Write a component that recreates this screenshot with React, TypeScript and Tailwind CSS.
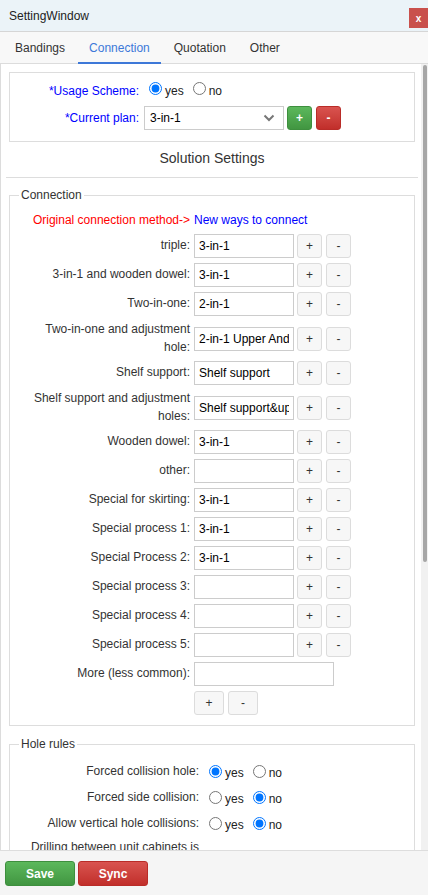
import React from "react";

const connRows: { label: string; value: string }[] = [
  { label: "triple:", value: "3-in-1" },
  { label: "3-in-1 and wooden dowel:", value: "3-in-1" },
  { label: "Two-in-one:", value: "2-in-1" },
  { label: "Two-in-one and adjustment hole:", value: "2-in-1 Upper And Lower" },
  { label: "Shelf support:", value: "Shelf support" },
  { label: "Shelf support and adjustment holes:", value: "Shelf support&upper and lower" },
  { label: "Wooden dowel:", value: "3-in-1" },
  { label: "other:", value: "" },
  { label: "Special for skirting:", value: "3-in-1" },
  { label: "Special process 1:", value: "3-in-1" },
  { label: "Special Process 2:", value: "3-in-1" },
  { label: "Special process 3:", value: "" },
  { label: "Special process 4:", value: "" },
  { label: "Special process 5:", value: "" },
];

const holeRows: { label: string; yes: boolean }[] = [
  { label: "Forced collision hole:", yes: true },
  { label: "Forced side collision:", yes: false },
  { label: "Allow vertical hole collisions:", yes: false },
  { label: "Drilling between unit cabinets is allowed:", yes: false },
];

function SmallBtn({ children, w = "w-[25px]" }: { children: React.ReactNode; w?: string }) {
  return (
    <div
      className={`${w} h-[24px] shrink-0 rounded-[3px] border border-[#dcdcdc] bg-[#f7f7f7] text-[#333] text-[12px] flex items-center justify-center`}
    >
      {children}
    </div>
  );
}

function Radio({ name, checked }: { name: string; checked: boolean }) {
  return (
    <input
      type="radio"
      name={name}
      defaultChecked={checked}
      className="m-0 w-[13px] h-[13px] shrink-0"
    />
  );
}

export default function App() {
  return (
    <div className="w-[428px] h-[895px] flex flex-col overflow-hidden bg-white text-[12px] text-[#333] font-['Liberation_Sans',Arial,sans-serif]">
      {/* Title bar */}
      <div className="h-[32px] shrink-0 border-b border-[#d6d6d6] bg-[#ebf3f8] flex items-center justify-between pl-[9px]">
        <span className="text-[12px] text-[#222]">SettingWindow</span>
        <div className="w-[19px] h-[20px] self-start mt-[8px] bg-[#c9504c] text-white text-[10px] font-bold flex items-center justify-center">
          x
        </div>
      </div>

      {/* Tabs */}
      <div className="h-[32px] shrink-0 border-b border-[#dcdcdc] bg-[#f8f8f8] flex items-stretch pl-[4px] gap-[2px]">
        <div className="px-[11px] flex items-center text-[#333]">Bandings</div>
        <div className="px-[11px] flex items-center text-[#3d78d8] border-b-[2px] border-[#3d78d8] pt-[1px] -mb-[1px]">
          Connection
        </div>
        <div className="px-[11px] flex items-center text-[#333]">Quotation</div>
        <div className="px-[11px] flex items-center text-[#333]">Other</div>
      </div>

      {/* Body */}
      <div className="flex-1 min-h-0 flex">
        <div className="flex-1 min-w-0 overflow-hidden border-l border-[#dcdcdc] pl-[8px] pr-[6px] pt-[8px]">
          {/* Top box */}
          <div className="border border-[#ddd] pt-[9px] pb-[11px]">
            <div className="flex items-center h-[18px]">
              <div className="w-[129px] text-right text-[#0000ff]">*Usage Scheme:</div>
              <div className="ml-[10px]"><Radio name="usage" checked={true} /></div>
              <span className="ml-[3px] text-[#222]">yes</span>
              <div className="ml-[9px]"><Radio name="usage" checked={false} /></div>
              <span className="ml-[3px] text-[#222]">no</span>
            </div>
            <div className="flex items-center h-[24px] mt-[6px]">
              <div className="w-[129px] text-right text-[#0000ff]">*Current plan:</div>
              <div className="ml-[5px] w-[140px] h-[24px] border border-[#ccc] bg-white flex items-center justify-between pl-[5px] pr-[8px] text-black">
                <span>3-in-1</span>
                <svg width="12" height="8" viewBox="0 0 12 8">
                  <path d="M1.5 1.5l4.5 4.5 4.5-4.5" fill="none" stroke="#777" strokeWidth="2" />
                </svg>
              </div>
              <div className="ml-[3px] w-[25px] h-[24px] rounded-[3px] border border-[#3e8f3e] bg-gradient-to-b from-[#5cb85c] to-[#419641] text-white font-bold flex items-center justify-center">
                +
              </div>
              <div className="ml-[4px] w-[25px] h-[24px] rounded-[3px] border border-[#b92c28] bg-gradient-to-b from-[#d9534f] to-[#c12e2a] text-white font-bold flex items-center justify-center">
                -
              </div>
            </div>
          </div>

          {/* Solution Settings */}
          <div className="-mx-[3px] pt-[6px] pb-[9px] border-b border-[#ddd] text-center text-[14px] leading-[20px] text-[#333]">
            Solution Settings
          </div>

          {/* Connection fieldset */}
          <fieldset className="mt-[9px] border border-[#ddd] px-[12px] pb-[10px]">
            <legend className="ml-[-3px] px-[2px] leading-[16px] text-[#333]">Connection</legend>
            <div className="mt-[8px] flex items-center h-[18px] gap-[4px]">
              <div className="w-[168px] text-right text-[#ff0000] whitespace-nowrap">Original connection method-&gt;</div>
              <div className="text-[#0000ff] whitespace-nowrap">New ways to connect</div>
            </div>
            {connRows.map((r) => (
              <div key={r.label} className="mt-[5px] flex items-center">
                <div className="w-[168px] text-right leading-[17.5px]">{r.label}</div>
                <input
                  type="text"
                  readOnly
                  defaultValue={r.value}
                  className="ml-[4px] w-[100px] h-[24px] border border-[#ccc] px-[4px] text-[12px] text-black outline-none"
                />
                <div className="ml-[3px]"><SmallBtn>+</SmallBtn></div>
                <div className="ml-[4px]"><SmallBtn>-</SmallBtn></div>
              </div>
            ))}
            <div className="mt-[5px] flex items-center">
              <div className="w-[168px] text-right leading-[17.5px]">More (less common):</div>
              <input
                type="text"
                readOnly
                defaultValue=""
                className="ml-[4px] w-[140px] h-[24px] border border-[#ccc] px-[4px] text-[12px] text-black outline-none"
              />
            </div>
            <div className="mt-[5px] flex items-center pl-[172px] gap-[4px]">
              <SmallBtn w="w-[30px]">+</SmallBtn>
              <SmallBtn w="w-[30px]">-</SmallBtn>
            </div>
          </fieldset>

          {/* Hole rules fieldset */}
          <fieldset className="mt-[10px] border border-[#ddd] px-[12px] pb-[10px]">
            <legend className="ml-[-3px] px-[2px] leading-[16px] text-[#333]">Hole rules</legend>
            {holeRows.map((r, i) => (
              <div key={r.label} className={`${i === 0 ? "mt-[9px]" : "mt-[5px]"} flex items-center min-h-[20px]`}>
                <div className="w-[177px] text-right leading-[17.5px]">{r.label}</div>
                <div className="ml-[10px] flex"><Radio name={`hole${i}`} checked={r.yes} /></div>
                <span className="ml-[3px] text-[#222] pt-[3px]">yes</span>
                <div className="ml-[9px] flex"><Radio name={`hole${i}`} checked={!r.yes} /></div>
                <span className="ml-[3px] text-[#222] pt-[3px]">no</span>
              </div>
            ))}
          </fieldset>
        </div>

        {/* Scrollbar */}
        <div className="w-[7px] shrink-0 bg-[#f1f1f1] pl-[2px] pt-[1px]">
          <div className="w-[4px] h-[497px] rounded-full bg-[#a6a6a6]" />
        </div>
      </div>

      {/* Footer */}
      <div className="h-[45px] shrink-0 border-t border-[#ddd] bg-[#f5f5f5] flex items-start gap-[3px] px-[5px] pt-[10px]">
        <div className="w-[70px] h-[25px] rounded-[3px] border border-[#3e8f3e] bg-gradient-to-b from-[#5cb85c] to-[#419641] text-white font-bold text-[12px] flex items-center justify-center">
          Save
        </div>
        <div className="w-[70px] h-[25px] rounded-[3px] border border-[#b92c28] bg-gradient-to-b from-[#d9534f] to-[#c12e2a] text-white font-bold text-[12px] flex items-center justify-center">
          Sync
        </div>
      </div>
    </div>
  );
}
